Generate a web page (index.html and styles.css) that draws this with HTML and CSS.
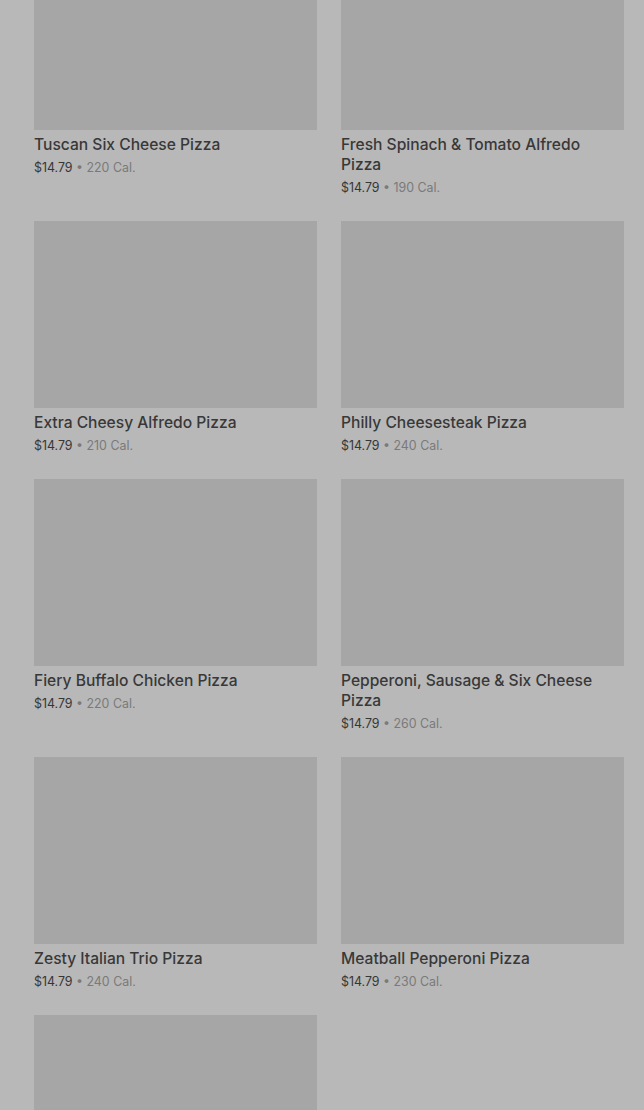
FILE: index.html
```html
<!DOCTYPE html>
<html>
<head>
<meta charset="utf-8">
<link rel="stylesheet" href="styles.css">
</head>
<body>
<div class="grid">
  <div class="card"><div class="img"></div><div class="title">Tuscan Six Cheese Pizza</div><div class="meta"><span class="price">$14.79</span> • 220 Cal.</div></div>
  <div class="card"><div class="img"></div><div class="title">Fresh Spinach &amp; Tomato Alfredo Pizza</div><div class="meta"><span class="price">$14.79</span> • 190 Cal.</div></div>
  <div class="card"><div class="img"></div><div class="title">Extra Cheesy Alfredo Pizza</div><div class="meta"><span class="price">$14.79</span> • 210 Cal.</div></div>
  <div class="card"><div class="img"></div><div class="title">Philly Cheesesteak Pizza</div><div class="meta"><span class="price">$14.79</span> • 240 Cal.</div></div>
  <div class="card"><div class="img"></div><div class="title">Fiery Buffalo Chicken Pizza</div><div class="meta"><span class="price">$14.79</span> • 220 Cal.</div></div>
  <div class="card"><div class="img"></div><div class="title">Pepperoni, Sausage &amp; Six Cheese Pizza</div><div class="meta"><span class="price">$14.79</span> • 260 Cal.</div></div>
  <div class="card"><div class="img"></div><div class="title">Zesty Italian Trio Pizza</div><div class="meta"><span class="price">$14.79</span> • 240 Cal.</div></div>
  <div class="card"><div class="img"></div><div class="title">Meatball Pepperoni Pizza</div><div class="meta"><span class="price">$14.79</span> • 230 Cal.</div></div>
  <div class="card"><div class="img"></div></div>
</div>
</body>
</html>
```
FILE: styles.css
```css
html, body {
  margin: 0;
  padding: 0;
  background: #b8b8b8;
  overflow: hidden;
  height: 1110px;
}
body {
  font-family: Inter, "Liberation Sans", sans-serif;
}
.grid {
  display: grid;
  grid-template-columns: 283px 283px;
  column-gap: 24px;
  row-gap: 24px;
  padding: 0 20px 0 34px;
  margin-top: -57px;
}
.img {
  height: 187px;
  background: #a6a6a6;
}
.title {
  margin-top: 5px;
  max-width: 272px;
  font-size: 15.6px;
  line-height: 20px;
  font-weight: 500;
  color: #383838;
}
.meta {
  margin-top: 3px;
  font-size: 12.4px;
  line-height: 19px;
  color: #7a7a7a;
}
.price {
  color: #363636;
}
```
